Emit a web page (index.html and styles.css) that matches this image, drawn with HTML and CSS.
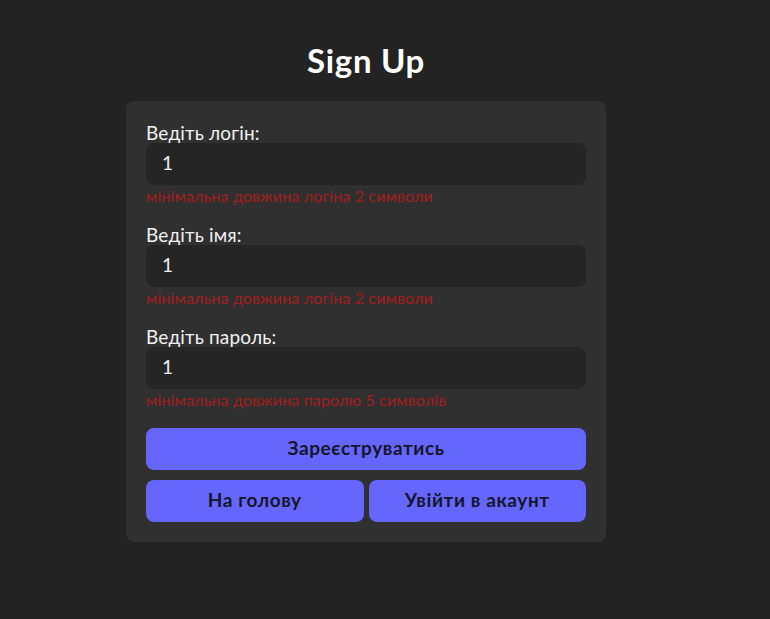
FILE: index.html
```html
<!DOCTYPE html>
<html lang="uk">
<head>
<meta charset="utf-8">
<title>Sign Up</title>
<link rel="stylesheet" href="styles.css">
</head>
<body>
<main class="page">
  <h1 class="title">Sign Up</h1>
  <form class="card">
    <div class="field">
      <label class="label">Ведіть логін:</label>
      <div class="input">1</div>
      <div class="error">мінімальна довжина логіна 2 символи</div>
    </div>
    <div class="field">
      <label class="label">Ведіть імя:</label>
      <div class="input">1</div>
      <div class="error">мінімальна довжина логіна 2 символи</div>
    </div>
    <div class="field">
      <label class="label">Ведіть пароль:</label>
      <div class="input">1</div>
      <div class="error">мінімальна довжина паролю 5 символів</div>
    </div>
    <button type="button" class="btn">Зареєструватись</button>
    <div class="row">
      <button type="button" class="btn">На голову</button>
      <button type="button" class="btn">Увійти в акаунт</button>
    </div>
  </form>
</main>
</body>
</html>
```
FILE: styles.css
```css
html, body {
  margin: 0;
  padding: 0;
  background: #232323;
  height: 100%;
}
body {
  font-family: Lato, "Noto Sans", sans-serif;
  color: #f2f2f2;
}
.page {
  display: flex;
  flex-direction: column;
  align-items: center;
  padding: 40px 38px 0 0;
}
.title {
  margin: 0 0 21px;
  font-size: 33px;
  font-weight: 700;
  letter-spacing: 0.7px;
  line-height: 40px;
  color: #ffffff;
}
.card {
  width: 440px;
  background: #303030;
  border-radius: 8px;
  padding: 21px 20px 20px;
  display: flex;
  flex-direction: column;
}
.field {
  display: flex;
  flex-direction: column;
  margin-bottom: 18px;
}
.label {
  font-size: 19px;
  letter-spacing: 0.15px;
  line-height: 21px;
  color: #f2f2f2;
}
.input {
  box-sizing: border-box;
  height: 42px;
  background: #252525;
  border-radius: 8px;
  padding: 0 16px 3px;
  display: flex;
  align-items: center;
  font-size: 19px;
  color: #f2f2f2;
}
.error {
  font-size: 16px;
  letter-spacing: 0.15px;
  line-height: 21px;
  color: #a41d1d;
}
.btn {
  box-sizing: border-box;
  height: 42px;
  border: none;
  border-radius: 8px;
  background: #6466fc;
  color: #16162a;
  font-family: inherit;
  font-size: 19px;
  letter-spacing: 0.6px;
  font-weight: 700;
  padding: 0 0 3px;
  cursor: pointer;
}
.row {
  display: flex;
  gap: 5px;
  margin-top: 10px;
}
.row .btn {
  flex: 1;
}
```
